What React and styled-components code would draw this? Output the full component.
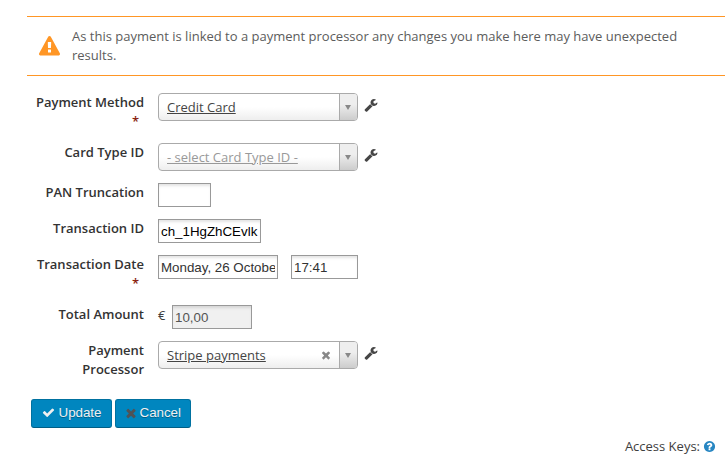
import React from "react";
import styled, { createGlobalStyle } from "styled-components";

const GlobalStyle = createGlobalStyle`
  * { box-sizing: border-box; }
  body {
    margin: 0;
    background: #fff;
    color: #3e3e3e;
    font: 13px/19px "Open Sans", sans-serif;
    overflow: hidden;
  }
`;

const Page = styled.main`
  width: 725px;
  height: 461px;
  padding-top: 16px;
`;

const Notice = styled.div`
  display: flex;
  height: 60px;
  margin-left: 27px;
  padding: 10px 30px 0 12px;
  border-top: 1px solid #ff9625;
  border-bottom: 1px solid #ff9625;
  color: #5c5c5c;
`;

const NoticeIcon = styled.span`
  flex: none;
  width: 33px;
  padding-top: 9px;
`;

const Form = styled.form`
  padding: 17px 0 0 31px;
`;

const Row = styled.div`
  display: flex;
  height: ${(p) => p.$height}px;
`;

const Label = styled.label`
  width: 113px;
  margin-right: 14px;
  font-weight: 600;
  text-align: right;
  color: #333;
`;

const Required = styled.span`
  display: block;
  padding-right: 5px;
  color: #8a1f11;
`;

const Select = styled.div`
  display: flex;
  width: 200px;
  height: 28px;
  overflow: hidden;
  border: 1px solid #aaa;
  border-radius: 4px;
  background: linear-gradient(to top, #eee 0%, #fff 50%);
  color: ${(p) => (p.$placeholder ? "#999" : "#444")};
`;

const Choice = styled.span`
  flex: 1;
  padding-left: 8px;
  line-height: 26px;
  text-decoration: underline;
`;

const Clear = styled.span`
  width: 19px;
  padding-top: 7px;
  color: #888;
`;

const Arrow = styled.span`
  display: flex;
  width: 18px;
  justify-content: center;
  padding: 11px 1px 0 0;
  border-left: 1px solid #aaa;
  background: linear-gradient(to top, #ccc 0%, #eee 60%);

  &::after {
    content: "";
    height: 0;
    border: 3px solid transparent;
    border-top: 5px solid #888;
    border-bottom: 0;
  }
`;

const Tool = styled.span`
  padding: 5px 0 0 6px;
  color: #464646;
`;

const Input = styled.input`
  width: ${(p) => p.$width}px;
  height: 24px;
  margin: 0;
  padding: 1px 2px 0;
  border: 1px solid #999;
  border-radius: 0;
  outline: none;
  background: ${(p) => (p.disabled ? "#f0f0f0" : "#fff")};
  box-shadow: inset 0 3px 3px -1px ${(p) => (p.disabled ? "#d6d6d6" : "#e4e4e4")};
  color: ${(p) => p.$color || "#333"};
  font: 13.333px "Liberation Sans", Arial, sans-serif;
`;

const Times = styled.div`
  display: flex;
  gap: 13px;
`;

const Currency = styled.span`
  width: 14px;
  padding-top: 1px;
`;

const Actions = styled.div`
  display: flex;
  gap: 3px;
`;

const Button = styled.button`
  display: flex;
  width: ${(p) => p.$width}px;
  height: 29px;
  padding: 0 0 2px ${(p) => p.$inset}px;
  align-items: center;
  gap: ${(p) => p.$gap}px;
  border: 1px solid #0071a0;
  border-bottom-color: #005e86;
  border-radius: 3px;
  background: #0086bf;
  color: #f0f0f0;
  font: 13.333px "Liberation Sans", Arial, sans-serif;
  text-shadow: 0 1px 0 rgba(0, 0, 0, 0.3);
`;

const Footer = styled.footer`
  display: flex;
  justify-content: flex-end;
  gap: 3px;
  padding: 9px 9px 0 0;

  svg { margin-top: 3px; color: #2786c2; }
`;

const Svg = styled.svg`
  display: block;
  flex: none;
  fill: ${(p) => p.$fill || "currentColor"};
`;

const paths = {
  wrench:
    "M1092 1052l-682 682q-37 37-90 37-52 0-91-37l-106-108q-38-36-38-90 0-53 38-91l681-681q39 98 114.500 173.500t173.500 114.500zm634-435q0 39-23 106-47 134-164.500 217.500t-258.500 83.500q-185 0-316.500-131.500t-131.500-316.500 131.500-316.500 316.500-131.500q58 0 121.500 16.500t107.500 46.500q16 11 16 28t-16 28l-293 169v224l193 107q5-3 79-48.500t135.500-81 70.500-35.500q15 0 23.500 10t8.500 25z",
  check:
    "M1671 566q0 40-28 68l-724 724-136 136q-28 28-68 28t-68-28l-136-136-362-362q-28-28-28-68t28-68l136-136q28-28 68-28t68 28l294 295 656-657q28-28 68-28t68 28l136 136q28 28 28 68z",
  times:
    "M1490 1322q0 40-28 68l-136 136q-28 28-68 28t-68-28l-294-294-294 294q-28 28-68 28t-68-28l-136-136q-28-28-28-68t28-68l294-294-294-294q-28-28-28-68t28-68l136-136q28-28 68-28t68 28l294 294 294-294q28-28 68-28t68 28l136 136q28 28 28 68t-28 68l-294 294 294 294q28 28 28 68z",
  warning:
    "M1024 1375v-190q0-14-9.500-23.500t-22.500-9.500h-192q-13 0-22.500 9.500t-9.500 23.500v190q0 14 9.500 23.500t22.500 9.500h192q13 0 22.500-9.500t9.500-23.500zm-2-374l18-459q0-12-10-19-13-11-24-11h-220q-11 0-24 11-10 7-10 21l17 457q0 10 10 16.500t24 6.500h185q14 0 23.500-6.500t10.500-16.500zm-14-934l768 1408q35 63-2 126-17 29-46.500 46t-63.500 17h-1536q-34 0-63.500-17t-46.500-46q-37-63-2-126l768-1408q17-31 47-49t65-18 65 18 47 49z",
  help:
    "M1024 1376v-192q0-14-9-23t-23-9h-192q-14 0-23 9t-9 23v192q0 14 9 23t23 9h192q14 0 23-9t9-23zm256-672q0-88-55.500-163t-138.500-116-170-41q-243 0-371 213-15 24 8 42l132 100q7 6 19 6 16 0 25-12 53-68 86-92 34-24 86-24 48 0 85.500 26t37.500 59q0 38-20 61t-68 45q-63 28-115.500 86.500t-52.500 125.500v36q0 14 9 23t23 9h192q14 0 23-9t9-23q0-19 21.500-49.500t54.500-49.500q32-18 49-28.500t46-35 44.500-48 28-60.500 12.500-81zm384 192q0 209-103 385.500t-279.500 279.500-385.500 103-385.500-103-279.500-279.500-103-385.500 103-385.500 279.500-279.500 385.500-103 385.500 103 279.500 279.500 103 385.500z",
};

function Icon({ name, size, fill }) {
  return (
    <Svg width={size} height={size} viewBox="0 0 1792 1792" $fill={fill} aria-hidden="true">
      <path d={paths[name]} />
    </Svg>
  );
}

function Field({ label, height, required, children }) {
  return (
    <Row $height={height}>
      <Label>
        {label}
        {required && <Required>*</Required>}
      </Label>
      {children}
    </Row>
  );
}

function Picker({ value, placeholder, clearable }) {
  return (
    <>
      <Select $placeholder={placeholder}>
        <Choice>{value}</Choice>
        {clearable && (
          <Clear>
            <Icon name="times" size={12} />
          </Clear>
        )}
        <Arrow />
      </Select>
      <Tool>
        <Icon name="wrench" size={14} />
      </Tool>
    </>
  );
}

export default function App() {
  return (
    <Page>
      <GlobalStyle />
      <Notice>
        <NoticeIcon>
          <Icon name="warning" size={21} fill="#ff9625" />
        </NoticeIcon>
        <span>
          As this payment is linked to a payment processor any changes you make
          here may have unexpected results.
        </span>
      </Notice>
      <Form>
        <Field label="Payment Method" height={50} required>
          <Picker value="Credit Card" />
        </Field>
        <Field label="Card Type ID" height={40}>
          <Picker value="- select Card Type ID -" placeholder />
        </Field>
        <Field label="PAN Truncation" height={36}>
          <Input $width={53} />
        </Field>
        <Field label="Transaction ID" height={36}>
          <Input $width={103} $color="#000" defaultValue="ch_1HgZhCEvlk" />
        </Field>
        <Field label="Transaction Date" height={50} required>
          <Times>
            <Input $width={120} defaultValue="Monday, 26 October 2020" />
            <Input $width={67} defaultValue="17:41" />
          </Times>
        </Field>
        <Field label="Total Amount" height={36}>
          <Currency>€</Currency>
          <Input $width={80} $color="#545454" disabled defaultValue="10,00" />
        </Field>
        <Field label="Payment Processor" height={58}>
          <Picker value="Stripe payments" clearable />
        </Field>
        <Actions>
          <Button type="button" $width={81} $inset={10} $gap={3.5}>
            <Icon name="check" size={13} />
            Update
          </Button>
          <Button type="button" $width={76} $inset={8} $gap={1.5}>
            <Icon name="times" size={14} fill="#505357" />
            Cancel
          </Button>
        </Actions>
      </Form>
      <Footer>
        Access Keys:
        <Icon name="help" size={13} />
      </Footer>
    </Page>
  );
}
